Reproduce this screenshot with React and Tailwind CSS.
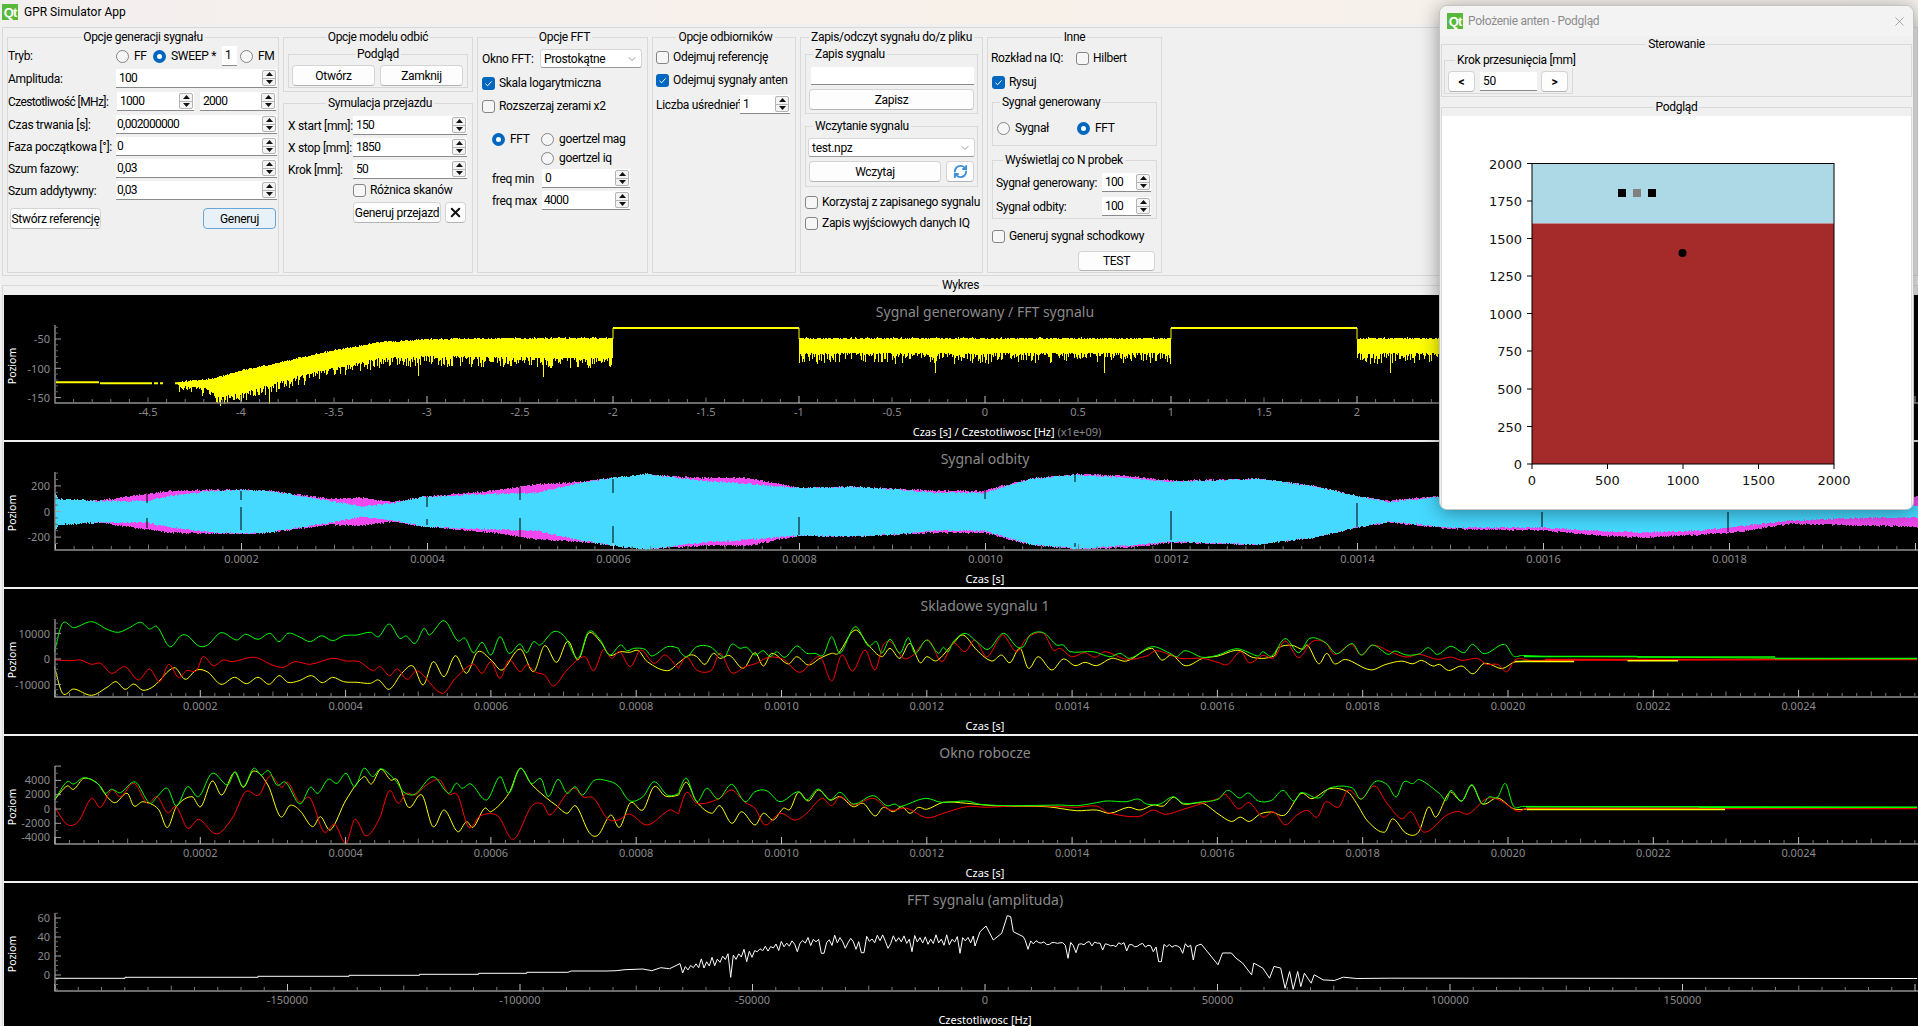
import React from "react";
import { ChevronDown, RefreshCw, X } from "lucide-react";

// seeded noise so every render gives the same traces
let seed = 1337;
function rnd() {
  seed = (seed + 0x6d2b79f5) | 0;
  let t = Math.imul(seed ^ (seed >>> 15), 1 | seed);
  t = (t + Math.imul(t ^ (t >>> 7), 61 | t)) ^ t;
  return ((t ^ (t >>> 14)) >>> 0) / 4294967296;
}

function lerp(points, x) {
  if (x <= points[0][0]) return points[0][1];
  for (let i = 1; i < points.length; i++) {
    if (x <= points[i][0]) {
      const [x0, y0] = points[i - 1];
      const [x1, y1] = points[i];
      return y0 + ((y1 - y0) * (x - x0)) / (x1 - x0);
    }
  }
  return points[points.length - 1][1];
}

function smooth(pts) {
  let d = `M${pts[0][0].toFixed(1)} ${pts[0][1].toFixed(1)}`;
  for (let i = 0; i < pts.length - 1; i++) {
    const p0 = pts[i - 1] || pts[i];
    const p1 = pts[i];
    const p2 = pts[i + 1];
    const p3 = pts[i + 2] || p2;
    const dx = p2[0] - p1[0];
    const s1 = (p2[1] - p0[1]) / (p2[0] - p0[0] || 1);
    const s2 = (p3[1] - p1[1]) / (p3[0] - p1[0] || 1);
    const c1x = p1[0] + dx / 3;
    const c1y = p1[1] + (s1 * dx) / 3;
    const c2x = p2[0] - dx / 3;
    const c2y = p2[1] - (s2 * dx) / 3;
    d += `C${c1x.toFixed(1)} ${c1y.toFixed(1)} ${c2x.toFixed(1)} ${c2y.toFixed(1)} ${p2[0].toFixed(1)} ${p2[1].toFixed(1)}`;
  }
  return d;
}

const pz7 = ([a, b]) => [a / 2.24, 580 + b / 3];
const pz11 = ([a, b]) => [680 + a / 3, 600 + b / 3];
const pz9 = ([a, b]) => [1218 + a / 2.234, 500 + b / 2.98];
const trace = (left, mid, right) => [...left.map(pz7).filter((p) => p[0] < 680), ...mid.map(pz11), ...right.map(pz9)];

/* ---- plot 1: FFT of generated signal ---- */
const fftTop = [[178, 382.7], [214, 379], [241, 371], [286, 361.7], [335, 350.7], [379, 343], [424, 340], [491, 339], [613, 338.7]];
const fftBottom = [[178, 385], [205, 388], [219, 396], [237, 394], [286, 379], [335, 367], [379, 358], [424, 356], [613, 358]];

function genBand() {
  let d = "";
  const col = (x, top, bottom) => {
    const spike = rnd();
    const extra = spike * spike * 11 + (spike > 0.985 ? 9 : 0);
    d += `M${x + 0.5} ${(top - rnd() * 1.6).toFixed(1)}V${(bottom + extra).toFixed(1)}`;
  };
  for (let x = 178; x < 613; x++) col(x, lerp(fftTop, x), lerp(fftBottom, x));
  for (let x = 799; x < 1171; x++) col(x, 339, 353);
  for (let x = 1357; x < 1445; x++) col(x, 339, 353);
  return d;
}
const bandPath = genBand();

/* ---- plot 2: reflected signal ---- */
const cyanAmp = [[55, 18], [58, 12], [98, 10], [147, 10], [170, 15], [214, 20], [241, 21], [268, 20], [330, 10], [361, 4.5], [393, 8], [424, 14], [491, 17], [536, 18], [580, 28], [613, 33], [647, 37], [700, 30], [747, 27], [799, 23], [851, 24], [893, 21.7], [936, 18], [983, 18], [1030, 32], [1077, 36], [1125, 33], [1172, 29], [1257, 32], [1313, 25], [1356, 15], [1389, 9], [1450, 15], [1545, 15], [1598, 18.5], [1643, 20], [1700, 18], [1791, 8], [1867, 5], [1917, 5]];
const magentaAmp = [[55, 10], [98, 10], [147, 17], [170, 20], [214, 21], [241, 21], [268, 20], [330, 12], [361, 13], [393, 9], [424, 14], [491, 20], [536, 26.5], [580, 29], [613, 33], [650, 36], [700, 33], [747, 33], [799, 23], [851, 24], [893, 22], [936, 20], [983, 20], [1030, 32], [1077, 36.7], [1125, 35], [1172, 30], [1257, 32], [1313, 25], [1356, 15], [1389, 10], [1450, 16], [1545, 18], [1598, 23], [1643, 25], [1700, 22], [1733, 20], [1791, 11], [1867, 13], [1917, 14]];

function genEnvelope(amp) {
  let d = "";
  for (let x = 55; x < 1918; x++) {
    const a = lerp(amp, x);
    d += `M${x + 0.5} ${(511.7 - a - rnd() * 1.8).toFixed(1)}V${(511.7 + a + rnd() * 1.8).toFixed(1)}`;
  }
  return d;
}
const magentaPath = genEnvelope(magentaAmp);
const cyanPath = genEnvelope(cyanAmp);
const notches = [[147, 493, 503], [147, 518, 528], [241, 491, 500], [241, 507, 530], [427, 497, 507], [427, 519, 525], [520, 487, 500], [520, 518, 537], [613, 479, 493], [613, 526, 543], [799, 517, 535], [985, 490, 499], [1075, 475, 482], [1075, 543, 547], [1171, 511, 540], [1357, 503, 527], [1542, 512, 527], [1728, 512, 532]];

/* ---- plot 3: signal components ---- */
const c3 = {
  green: trace(
    [[122, 215], [140, 130], [165, 143], [205, 125], [240, 148], [265, 157], [290, 143], [315, 127], [335, 147], [352, 140], [380, 200], [405, 167], [420, 167], [445, 198], [465, 195], [495, 158], [530, 180], [550, 163], [578, 178], [605, 160], [625, 185], [645, 160], [670, 170], [695, 185], [720, 167], [745, 182], [770, 167], [800, 165], [830, 157], [848, 170], [872, 132], [895, 175], [910, 168], [930, 190], [950, 145], [962, 165], [995, 122], [1025, 182], [1042, 175], [1060, 218], [1080, 187], [1100, 225], [1120, 170], [1140, 220], [1165, 192], [1180, 218], [1195, 185], [1210, 195], [1240, 155], [1265, 170], [1295, 235], [1318, 155], [1345, 180], [1365, 225], [1390, 195], [1405, 212], [1420, 205], [1445, 208], [1460, 228], [1495, 200], [1520, 205], [1545, 225]],
    [[0, 155], [20, 170], [50, 140], [90, 140], [120, 165], [135, 170], [155, 133], [180, 145], [200, 142], [225, 165], [250, 152], [270, 170], [290, 155], [315, 172], [350, 138], [380, 160], [405, 160], [430, 165], [455, 110], [480, 160], [525, 80], [565, 138], [590, 125], [605, 160], [630, 118], [660, 160], [685, 113], [705, 160], [740, 120], [775, 160], [790, 142], [805, 155], [820, 125], [855, 100], [890, 125], [925, 148], [970, 100], [1010, 140], [1030, 140], [1050, 105], [1090, 98], [1130, 135], [1150, 135], [1170, 155], [1240, 155], [1290, 170], [1320, 160], [1350, 175], [1415, 140], [1470, 160], [1490, 170], [1515, 152], [1568, 172]],
    [[0, 462], [40, 443], [70, 455], [90, 465], [100, 452], [120, 465], [150, 413], [180, 455], [205, 412], [240, 425], [265, 458], [300, 428], [320, 462], [345, 432], [380, 460], [395, 450], [420, 462], [450, 458], [470, 440], [490, 460], [520, 436], [550, 455], [568, 430], [595, 458], [640, 430], [660, 465], [680, 463], [725, 466], [935, 467], [1245, 472], [1562, 473]]
  ),
  yellow: trace(
    [[122, 260], [140, 340], [165, 327], [205, 346], [240, 322], [260, 305], [280, 328], [300, 312], [320, 331], [345, 318], [390, 263], [415, 298], [440, 270], [465, 276], [495, 313], [525, 292], [552, 311], [578, 292], [603, 313], [625, 287], [645, 307], [670, 302], [698, 287], [722, 308], [745, 292], [770, 305], [800, 307], [830, 310], [848, 300], [872, 328], [900, 280], [925, 258], [948, 315], [970, 245], [995, 290], [1020, 227], [1045, 280], [1070, 215], [1100, 240], [1125, 270], [1165, 207], [1195, 275], [1220, 197], [1247, 247], [1272, 183], [1295, 240], [1318, 160], [1345, 185], [1365, 225], [1390, 215], [1410, 217], [1430, 212], [1450, 245], [1495, 272], [1540, 230]],
    [[0, 185], [30, 165], [50, 170], [75, 193], [100, 160], [120, 175], [150, 167], [190, 205], [225, 158], [250, 198], [275, 160], [325, 192], [350, 170], [385, 195], [420, 175], [455, 160], [475, 160], [525, 90], [565, 135], [605, 170], [630, 145], [660, 175], [690, 130], [720, 188], [740, 170], [770, 182], [820, 130], [850, 105], [890, 150], [935, 183], [965, 165], [990, 188], [1020, 145], [1045, 205], [1075, 170], [1115, 210], [1150, 177], [1185, 197], [1215, 187], [1250, 197], [1295, 175], [1340, 183], [1415, 145], [1445, 180], [1475, 165], [1510, 195], [1530, 195], [1568, 175]],
    [[0, 465], [45, 448], [80, 470], [125, 465], [135, 440], [165, 433], [190, 445], [200, 432], [225, 488], [243, 457], [260, 488], [285, 475], [340, 506], [375, 490], [410, 480], [435, 488], [455, 478], [480, 495], [495, 490], [515, 508], [545, 495], [570, 518], [595, 487], [635, 502], [665, 482], [795, 481]]
  ),
  red: trace(
    [[122, 240], [160, 242], [180, 240], [205, 253], [225, 250], [250, 280], [280, 260], [310, 300], [335, 267], [358, 305], [378, 253], [400, 293], [418, 272], [440, 272], [455, 230], [478, 257], [500, 240], [520, 245], [570, 232], [610, 255], [635, 262], [660, 245], [695, 253], [745, 235], [775, 243], [805, 245], [835, 272], [852, 260], [872, 287], [890, 267], [912, 298], [935, 272], [990, 340], [1020, 295], [1060, 252], [1080, 280], [1100, 245], [1120, 295], [1140, 240], [1165, 275], [1180, 255], [1200, 277], [1220, 285], [1240, 318], [1270, 270], [1310, 230], [1330, 272], [1352, 208], [1370, 235], [1388, 215], [1412, 260], [1435, 210], [1465, 250], [1490, 225], [1520, 265]],
    [[0, 197], [20, 170], [50, 210], [95, 210], [120, 160], [155, 218], [195, 200], [230, 190], [265, 172], [310, 178], [360, 217], [420, 170], [455, 243], [485, 165], [518, 213], [555, 150], [585, 210], [610, 135], [635, 128], [670, 175], [700, 165], [745, 120], [785, 185], [820, 130], [855, 155], [885, 120], [920, 170], [955, 120], [970, 105], [1010, 155], [1040, 115], [1090, 100], [1120, 150], [1140, 145], [1175, 170], [1215, 158], [1245, 172], [1275, 155], [1340, 178], [1400, 168], [1430, 152], [1500, 175], [1568, 175]],
    [[0, 484], [22, 490], [50, 452], [70, 485], [100, 463], [125, 470], [150, 420], [180, 470], [210, 422], [240, 425], [260, 460], [298, 430], [320, 462], [345, 433], [385, 452], [420, 468], [450, 460], [490, 475], [520, 468], [545, 478], [580, 472], [600, 490], [625, 490], [645, 512], [665, 475], [700, 478], [1245, 476], [1562, 475]]
  ),
};

/* ---- plot 4: working window ---- */
const c4 = {
  green: trace(
    [[122, 660], [150, 605], [165, 612], [188, 593], [220, 612], [235, 640], [250, 628], [270, 638], [303, 606], [335, 670], [352, 650], [375, 625], [395, 678], [420, 620], [445, 650], [475, 580], [510, 615], [527, 575], [545, 620], [568, 565], [585, 585], [602, 572], [620, 615], [640, 607], [672, 672], [695, 622], [712, 640], [735, 598], [755, 610], [775, 580], [795, 620], [815, 565], [835, 590], [853, 566], [885, 600], [905, 637], [930, 642], [970, 590], [1005, 640], [1022, 610], [1035, 625], [1055, 612], [1090, 660], [1120, 590], [1140, 640], [1165, 565], [1190, 610], [1212, 597], [1228, 650], [1250, 598], [1270, 640], [1288, 620], [1305, 645], [1330, 602], [1360, 602], [1385, 618], [1410, 662], [1440, 650], [1465, 605], [1495, 645], [1520, 640]],
    [[0, 565], [20, 535], [50, 605], [80, 565], [115, 597], [155, 553], [195, 605], [225, 575], [260, 572], [300, 605], [355, 575], [380, 600], [415, 567], [450, 600], [480, 577], [520, 612], [580, 587], [620, 617], [645, 612], [660, 620], [735, 595], [785, 607], [860, 603], [900, 613], [1000, 617], [1140, 615], [1190, 617], [1240, 610], [1280, 603], [1340, 605], [1375, 597], [1400, 612], [1440, 612], [1480, 590], [1510, 610], [1568, 605]],
    [[0, 892], [22, 865], [48, 888], [68, 873], [90, 897], [120, 895], [145, 865], [170, 898], [185, 872], [225, 888], [250, 858], [300, 858], [320, 892], [350, 840], [378, 848], [398, 885], [415, 840], [435, 845], [450, 833], [495, 875], [510, 895], [520, 865], [545, 897], [567, 848], [590, 905], [605, 885], [625, 885], [642, 845], [660, 912], [680, 913], [1075, 914], [1562, 916]]
  ),
  yellow: trace(
    [[122, 660], [150, 618], [165, 628], [188, 595], [220, 612], [240, 650], [258, 668], [285, 640], [300, 678], [320, 665], [355, 688], [375, 743], [395, 680], [430, 650], [450, 680], [475, 603], [497, 645], [525, 577], [545, 622], [568, 573], [600, 615], [628, 710], [650, 676], [672, 692], [700, 740], [718, 710], [740, 750], [775, 660], [815, 590], [832, 612], [853, 568], [875, 600], [890, 600], [915, 682], [945, 645], [970, 740], [995, 690], [1025, 755], [1045, 725], [1060, 742], [1085, 685], [1100, 695], [1140, 640], [1165, 565], [1190, 612], [1225, 655], [1245, 675], [1270, 700], [1290, 678], [1320, 758], [1340, 765], [1368, 705], [1388, 742], [1412, 668], [1440, 690], [1465, 620], [1490, 648], [1520, 645]],
    [[0, 575], [20, 547], [50, 605], [95, 640], [120, 617], [155, 670], [185, 635], [225, 675], [250, 640], [280, 660], [310, 625], [330, 628], [355, 577], [385, 603], [415, 570], [450, 600], [480, 590], [520, 620], [550, 610], [585, 648], [610, 622], [640, 635], [665, 620], [690, 640], [715, 622], [740, 628], [790, 607], [860, 610], [950, 618], [1100, 620], [1190, 632], [1250, 630], [1290, 640], [1345, 622], [1380, 630], [1420, 615], [1450, 618], [1480, 592], [1510, 612], [1568, 610]],
    [[0, 935], [30, 958], [50, 945], [70, 958], [95, 935], [120, 930], [150, 938], [185, 875], [210, 890], [250, 860], [290, 870], [310, 905], [335, 958], [372, 990], [390, 950], [420, 993], [448, 990], [470, 915], [487, 945], [510, 885], [520, 870], [545, 897], [567, 850], [590, 905], [625, 888], [660, 920], [690, 921], [1132, 921]]
  ),
  red: trace(
    [[122, 680], [150, 733], [175, 725], [205, 655], [225, 682], [250, 630], [270, 650], [300, 610], [330, 670], [352, 650], [375, 698], [395, 680], [420, 745], [445, 718], [485, 762], [520, 715], [550, 635], [580, 645], [605, 587], [630, 622], [645, 607], [670, 665], [695, 655], [725, 755], [750, 733], [775, 790], [795, 718], [820, 768], [850, 715], [872, 632], [892, 670], [910, 640], [930, 645], [955, 615], [985, 600], [1005, 642], [1025, 645], [1050, 742], [1075, 708], [1115, 708], [1150, 778], [1190, 680], [1215, 672], [1232, 705], [1270, 640], [1288, 625], [1305, 650], [1330, 655], [1360, 715], [1385, 720], [1410, 702], [1450, 735], [1500, 690], [1520, 700]],
    [[0, 625], [20, 577], [50, 610], [115, 597], [155, 570], [195, 607], [225, 625], [255, 675], [300, 640], [345, 660], [380, 640], [425, 595], [455, 617], [480, 590], [520, 615], [580, 595], [630, 630], [680, 625], [740, 653], [790, 640], [860, 620], [920, 622], [1000, 618], [1100, 618], [1190, 622], [1250, 618], [1285, 638], [1375, 650], [1420, 630], [1455, 643], [1510, 628], [1568, 610]],
    [[0, 890], [17, 878], [45, 920], [70, 902], [100, 945], [125, 930], [150, 968], [175, 940], [200, 925], [222, 945], [240, 900], [270, 915], [290, 865], [320, 890], [350, 852], [378, 905], [410, 950], [432, 930], [460, 990], [510, 940], [535, 928], [560, 935], [600, 890], [630, 895], [670, 928], [690, 918], [1562, 919]]
  ),
};

/* ---- plot 5: FFT amplitude ---- */
function genFft() {
  const left = [[122, 325], [280, 325], [280, 322], [578, 322], [578, 319], [782, 319], [782, 316], [940, 316], [940, 313], [1072, 313], [1072, 310], [1180, 310], [1180, 307], [1272, 307], [1280, 303], [1360, 303], [1380, 302], [1400, 299], [1440, 297], [1460, 302], [1480, 293], [1500, 296]];
  const base = [[0, 235], [100, 215], [200, 190], [300, 165], [400, 152], [600, 150], [860, 150], [1040, 145], [1100, 150], [1568, 160]];
  const spikes = [[150, 262], [203, 215], [350, 185], [428, 190], [497, 175], [528, 178], [548, 188], [622, 175], [698, 185], [838, 190], [1043, 178], [1165, 205], [1190, 188], [1265, 180], [1340, 183], [1418, 185], [1440, 215], [1510, 190], [1537, 210]];
  const peak = [[885, 168], [900, 125], [918, 108], [940, 150], [965, 130], [982, 77], [992, 80], [1000, 125], [1030, 140]];
  const pts = left.map(([a, b]) => [a / 2.24, 870 + b / 3]);
  const noisy = (a) => {
    const s = spikes.find((p) => Math.abs(p[0] - a) <= 4);
    return [680 + a / 3, 890 + (s ? s[1] : lerp(base, a) + (a % 16 ? 9 : -9) + (rnd() - 0.5) * 14) / 3];
  };
  for (let a = 0; a < 885; a += 8) pts.push(noisy(a));
  peak.forEach(([a, b]) => pts.push([680 + a / 3, 890 + b / 3]));
  for (let a = 1036; a < 1568; a += 8) pts.push(noisy(a));
  const right = [[0, 1385], [10, 1350], [30, 1350], [40, 1365], [55, 1380], [75, 1415], [80, 1380], [100, 1395], [115, 1425], [125, 1390], [140, 1395], [150, 1455], [160, 1405], [168, 1458], [178, 1405], [185, 1450], [193, 1410], [208, 1440], [215, 1415], [235, 1430], [260, 1432], [280, 1422], [310, 1426], [385, 1425], [1562, 1426]];
  right.forEach((p) => pts.push(pz9(p)));
  return pts.map((p, i) => `${i ? "L" : "M"}${p[0].toFixed(1)} ${p[1].toFixed(1)}`).join("");
}
const fftPath = genFft();

function Plot({ top, height = 145, title, xLabel, xLabelX = 985, xExtra, yLabelY, xOrigin, xStep, xLabelAt, yOrigin, yStep, yEvery, yLabels, children }) {
  const axisTop = top + 30;
  const axisBottom = top + 108;
  const xTicks = [];
  for (let i = Math.ceil((55 - xOrigin) / xStep); xOrigin + i * xStep < 1918; i++) xTicks.push(i);
  const yTicks = [];
  for (let i = Math.ceil((axisTop - yOrigin) / yStep); yOrigin + i * yStep < axisBottom; i++) yTicks.push(i);
  return (
    <svg width="1914" height={height} viewBox={`4 ${top} 1914 ${height}`} className="block shrink-0 bg-black font-['Noto_Sans',sans-serif] tracking-normal">
      <text x="985" y={top + 22} textAnchor="middle" className="fill-[#8a8a8a] text-[14px]">{title}</text>
      <text x="16" y={yLabelY} textAnchor="middle" transform={`rotate(-90 16 ${yLabelY})`} className="fill-white text-[10.5px]">Poziom</text>
      {children}
      <path d={`M55 ${axisTop}V${axisBottom}H1918`} fill="none" stroke="#8f8f8f" strokeWidth="1.4" />
      {xTicks.map((i) => {
        const x = xOrigin + i * xStep;
        const len = i % 10 === 0 ? 7 : i % 5 === 0 ? 5.5 : 4;
        return <path key={i} d={`M${x} ${axisBottom}v${-len}`} stroke={i % 10 === 0 ? "#c0c0c0" : "#777777"} strokeWidth="1" />;
      })}
      {xTicks.map((i) => {
        const x = xOrigin + i * xStep;
        const label = x > 70 && x < 1880 ? xLabelAt(i) : null;
        return label === null ? null : (
          <text key={i} x={x} y={axisBottom + 13} textAnchor="middle" className="fill-[#8a8a8a] text-[11px]">{label}</text>
        );
      })}
      {yTicks.map((i) => (
        <path key={i} d={`M55 ${yOrigin + i * yStep}h${i % yEvery === 0 ? 6 : 3}`} stroke={i % yEvery === 0 ? "#a0a0a0" : "#666666"} strokeWidth="1" />
      ))}
      {yLabels.map(([y, label]) => (
        <text key={label} x="50" y={y + 4} textAnchor="end" className="fill-[#8a8a8a] text-[11px]">{label}</text>
      ))}
      <text x={xLabelX} y={top + 141} textAnchor="middle" className="fill-white text-[11px]">
        {xLabel}
        {xExtra && <tspan className="fill-[#8a8a8a]"> {xExtra}</tspan>}
      </text>
    </svg>
  );
}

const timeLabel = (step) => (i) => (i % 10 === 0 && i > 0 ? ((i / 10) * step).toFixed(4) : null);

function Lines({ c }) {
  return (
    <g fill="none" strokeWidth="1">
      <path d={smooth(c.yellow)} stroke="#ffff00" />
      <path d={smooth(c.red)} stroke="#ff0000" />
      <path d={smooth(c.green)} stroke="#00ff00" />
    </g>
  );
}

function Group({ title, left, className = "", children }) {
  return (
    <fieldset className={`min-w-0 shrink-0 border border-[#d9d9d9] ${className}`}>
      <legend className={`${left ? "ml-[7px]" : "mx-auto"} h-[16px] whitespace-nowrap px-[2px] leading-[16px]`}>{title}</legend>
      {children}
    </fieldset>
  );
}

function SpinArrows() {
  return (
    <div className="mr-[1px] flex h-[16px] w-[14px] shrink-0 flex-col rounded-[2px] border border-[#b4b4b4] bg-[#f4f4f4]">
      <div className="flex flex-1 items-center justify-center border-b border-[#b4b4b4]">
        <svg width="7" height="4" viewBox="0 0 7 4"><path d="M3.5 0L7 4H0z" fill="#111" /></svg>
      </div>
      <div className="flex flex-1 items-center justify-center">
        <svg width="7" height="4" viewBox="0 0 7 4"><path d="M0 0h7L3.5 4z" fill="#111" /></svg>
      </div>
    </div>
  );
}

function Spin({ value, className = "" }) {
  return (
    <div className={`flex h-[19px] shrink-0 items-center border-b border-[#8a8a8a] bg-white pl-[3px] ${className}`}>
      <span className="flex-1 leading-[18px] tracking-[-0.7px]">{value}</span>
      <SpinArrows />
    </div>
  );
}

function Field({ value, className = "" }) {
  return <div className={`h-[19px] shrink-0 border-b border-[#8a8a8a] bg-white pl-[3px] leading-[18px] ${className}`}>{value}</div>;
}

function Combo({ value, className = "" }) {
  return (
    <div className={`flex h-[19px] shrink-0 items-center justify-between rounded-[3px] border border-[#d6d6d6] border-b-[#9a9a9a] bg-white pl-[3px] pr-[3px] ${className}`}>
      <span>{value}</span>
      <ChevronDown size={12} strokeWidth={1} color="#333" />
    </div>
  );
}

function Btn({ children, className = "" }) {
  return (
    <div className={`flex h-[21px] shrink-0 items-center justify-center rounded-[4px] border border-[#d4d4d4] border-b-[#b4b4b4] bg-[#fdfdfd] whitespace-nowrap ${className}`}>
      {children}
    </div>
  );
}

function Check({ label, checked, className = "" }) {
  return (
    <div className={`flex h-[16px] shrink-0 items-center gap-[4px] whitespace-nowrap ${className}`}>
      {checked ? (
        <span className="flex h-[13px] w-[13px] shrink-0 items-center justify-center rounded-[3px] bg-[#0067c0]">
          <svg width="9" height="9" viewBox="0 0 9 9"><path d="M1.5 4.8L3.6 6.8L7.5 2.4" fill="none" stroke="#fff" strokeWidth="1" /></svg>
        </span>
      ) : (
        <span className="h-[13px] w-[13px] shrink-0 rounded-[3px] border border-[#858585] bg-[#f6f6f6]" />
      )}
      {label && <span>{label}</span>}
    </div>
  );
}

function Radio({ label, checked, className = "" }) {
  return (
    <div className={`flex h-[16px] shrink-0 items-center gap-[5px] whitespace-nowrap ${className}`}>
      {checked ? (
        <span className="flex h-[13px] w-[13px] shrink-0 items-center justify-center rounded-full bg-[#0067c0]">
          <span className="h-[5px] w-[5px] rounded-full bg-white" />
        </span>
      ) : (
        <span className="h-[13px] w-[13px] shrink-0 rounded-full border border-[#858585] bg-[#f6f6f6]" />
      )}
      <span>{label}</span>
    </div>
  );
}

function QtLogo({ className = "" }) {
  return (
    <div className={`flex h-[16px] w-[16px] shrink-0 items-center justify-center bg-[#57b83a] font-['Liberation_Sans',sans-serif] text-[13px] font-bold leading-none tracking-[-1px] text-white ${className}`}>
      Qt
    </div>
  );
}

function Row({ label, labelClass = "w-[108px]", className = "", children }) {
  return (
    <div className={`flex shrink-0 items-center ${className}`}>
      <span className={`shrink-0 whitespace-nowrap ${labelClass}`}>{label}</span>
      {children}
    </div>
  );
}

function AntennaWindow() {
  const yTicks = [[164.5, "2000"], [202, "1750"], [239.5, "1500"], [277, "1250"], [314.5, "1000"], [352, "750"], [390, "500"], [427.5, "250"], [465, "0"]];
  const xTicks = [[1532, "0"], [1607.5, "500"], [1683, "1000"], [1758.5, "1500"], [1834, "2000"]];
  return (
    <div className="absolute left-[1439px] top-[5px] flex h-[505px] w-[475px] flex-col overflow-hidden rounded-[8px] border border-[#c4c4c4] bg-[#f0f0f0] shadow-[0_3px_20px_rgba(0,0,0,0.4)]">
      <div className="flex h-[30px] shrink-0 items-center bg-[#f3f3f3] pl-[7px] pr-[6px]">
        <QtLogo />
        <span className="ml-[5px] flex-1 text-[#8c8c8c]">Położenie anten - Podgląd</span>
        <X size={15} strokeWidth={1} color="#777" />
      </div>
      <div className="mx-[1px] flex flex-col">
        <Group title="Sterowanie" className="h-[61px] px-[2px]">
          <Group title="Krok przesunięcia [mm]" left className="h-[42px] w-[129px] px-[3px]">
            <div className="mt-[3px] flex items-center">
              <Btn className="w-[27px] font-bold">&lt;</Btn>
              <Field value="50" className="ml-[5px] w-[57px]" />
              <Btn className="ml-[4px] w-[27px] font-bold">&gt;</Btn>
            </div>
          </Group>
        </Group>
        <Group title="Podgląd" className="mt-[2px] h-[420px]">
          <div className="pt-[1px]">
            <svg width="469" height="393" viewBox="1442 117 469 393" className="block bg-white font-['DejaVu_Sans',sans-serif] tracking-normal">
              <rect x="1532" y="164.5" width="302" height="60" fill="#add8e6" />
              <rect x="1532" y="224.5" width="302" height="240.5" fill="#a52a2a" />
              <rect x="1532" y="164.5" width="302" height="300.5" fill="none" stroke="#000" strokeWidth="1" />
              <rect x="1618" y="190" width="8" height="8" fill="#000" />
              <rect x="1633" y="190" width="8" height="8" fill="#808080" />
              <rect x="1648" y="190" width="8" height="8" fill="#000" />
              <circle cx="1682.5" cy="254" r="4" fill="#000" />
              {yTicks.map(([y, label]) => (
                <g key={label}>
                  <path d={`M1527 ${y}h5`} stroke="#000" strokeWidth="1" />
                  <text x="1522" y={y + 5} textAnchor="end" className="fill-[#111] text-[13px]">{label}</text>
                </g>
              ))}
              {xTicks.map(([x, label]) => (
                <g key={label}>
                  <path d={`M${x} 465v5`} stroke="#000" strokeWidth="1" />
                  <text x={x} y="486" textAnchor="middle" className="fill-[#111] text-[13px]">{label}</text>
                </g>
              ))}
            </svg>
          </div>
        </Group>
      </div>
    </div>
  );
}

export default function App() {
  return (
    <div className="relative h-[1026px] w-full overflow-hidden bg-[#f0f0f0] font-['Roboto',sans-serif] text-[12px] tracking-[-0.3px] text-black">
      <div className="flex h-[24px] items-center bg-gradient-to-r from-[#f3efef] via-[#f8f1ea] to-[#f5f1ec] pl-[2px]">
        <QtLogo />
        <span className="ml-[6px] tracking-normal">GPR Simulator App</span>
      </div>

      {/* options strip */}
      <div className="ml-[2px] mt-[3px] flex h-[249px] items-start gap-[4px] border border-[#d9d9d9] pl-[4px] pt-[1px]">
        <Group title="Opcje generacji sygnału" className="h-[244px] w-[272px]">
          <Row label="Tryb:" className="mt-[1px] h-[20px]">
            <Radio label="FF" className="w-[37px]" />
            <Radio label="SWEEP *" checked className="w-[69px]" />
            <Field value="1" className="!h-[20px] w-[15px]" />
            <Radio label="FM" className="ml-[3px]" />
          </Row>
          <Row label="Amplituda:" className="mt-[3px]"><Spin value="100" className="w-[161px]" /></Row>
          <Row label="Czestotliwość [MHz]:" className="mt-[4px]" labelClass="w-[109px] tracking-[-0.6px]">
            <Spin value="1000" className="w-[77px]" />
            <Spin value="2000" className="ml-[6px] w-[76px]" />
          </Row>
          <Row label="Czas trwania [s]:" className="mt-[4px]"><Spin value="0,002000000" className="w-[161px] !pl-[1px]" /></Row>
          <Row label="Faza początkowa [°]:" className="mt-[3px]"><Spin value="0" className="w-[161px] !pl-[1px]" /></Row>
          <Row label="Szum fazowy:" className="mt-[3px]"><Spin value="0,03" className="w-[161px] !pl-[1px]" /></Row>
          <Row label="Szum addytywny:" className="mt-[3px]"><Spin value="0,03" className="w-[161px] !pl-[1px]" /></Row>
          <div className="mt-[8px] flex justify-between pl-[2px] pr-[2px]">
            <Btn className="w-[91px]">Stwórz referencję</Btn>
            <Btn className="w-[73px] !border-[#6aa6d6] !bg-[#e8f1f8]">Generuj</Btn>
          </div>
        </Group>

        <div className="flex w-[190px] shrink-0 flex-col">
          <Group title="Opcje modelu odbić" className="h-[63px] px-[4px]">
            <Group title="Podgląd" className="mt-[1px] h-[42px] w-[180px]">
              <div className="mt-[3px] flex gap-[5px] pl-[3px]">
                <Btn className="w-[83px]">Otwórz</Btn>
                <Btn className="w-[83px]">Zamknij</Btn>
              </div>
            </Group>
          </Group>
          <Group title="Symulacja przejazdu" className="mt-[3px] h-[178px] pl-[4px]">
            <Row label="X start [mm]:" labelClass="w-[65px]" className="mt-[5px]"><Spin value="150" className="w-[114px]" /></Row>
            <Row label="X stop [mm]:" labelClass="w-[65px]" className="mt-[3px]"><Spin value="1850" className="w-[114px]" /></Row>
            <Row label="Krok [mm]:" labelClass="w-[65px]" className="mt-[3px]"><Spin value="50" className="w-[114px]" /></Row>
            <Check label="Różnica skanów" className="ml-[65px] mt-[3px]" />
            <div className="ml-[65px] mt-[4px] flex gap-[4px]">
              <Btn className="w-[88px]">Generuj przejazd</Btn>
              <Btn className="w-[21px]"><X size={15} strokeWidth={3.2} color="#111" /></Btn>
            </div>
          </Group>
        </div>

        <Group title="Opcje FFT" className="h-[244px] w-[171px] pl-[4px]">
          <Row label="Okno FFT:" labelClass="w-[58px]" className="mt-[4px]"><Combo value="Prostokątne" className="w-[102px]" /></Row>
          <Check label="Skala logarytmiczna" checked className="mt-[7px]" />
          <Check label="Rozszerzaj zerami x2" className="mt-[7px]" />
          <div className="ml-[10px] mt-[17px] flex">
            <Radio label="FFT" checked className="w-[49px]" />
            <Radio label="goertzel mag" />
          </div>
          <Radio label="goertzel iq" className="ml-[59px] mt-[3px]" />
          <Row label="freq min" labelClass="w-[50px]" className="ml-[10px] mt-[3px]"><Spin value="0" className="w-[88px]" /></Row>
          <Row label="freq max" labelClass="w-[50px]" className="ml-[10px] mt-[3px]"><Spin value="4000" className="w-[88px] !pl-[2px]" /></Row>
        </Group>

        <Group title="Opcje odbiorników" className="h-[244px] w-[144px] pl-[3px]">
          <Check label="Odejmuj referencję" className="mt-[4px]" />
          <Check label="Odejmuj sygnały anten" checked className="mt-[7px]" />
          <Row label="Liczba uśrednień" labelClass="w-[84px]" className="mt-[7px]"><Spin value="1" className="w-[50px]" /></Row>
        </Group>

        <Group title="Zapis/odczyt sygnału do/z pliku" className="h-[244px] w-[183px] px-[4px]">
          <Group title="Zapis sygnalu" left className="mt-[1px] h-[68px]">
            <Field value="" className="ml-[5px] mt-[5px] !h-[18px] w-[163px]" />
            <Btn className="ml-[3px] mt-[4px] w-[165px]">Zapisz</Btn>
          </Group>
          <Group title="Wczytanie sygnalu" left className="mt-[4px] h-[69px]">
            <Combo value="test.npz" className="ml-[2px] mt-[4px] w-[167px]" />
            <div className="ml-[3px] mt-[4px] flex gap-[5px]">
              <Btn className="w-[132px]">Wczytaj</Btn>
              <Btn className="w-[28px]"><RefreshCw size={15} strokeWidth={3} color="#3f8fd6" /></Btn>
            </div>
          </Group>
          <Check label="Korzystaj z zapisanego sygnalu" className="mt-[7px]" />
          <Check label="Zapis wyjściowych danych IQ" className="mt-[5px]" />
        </Group>

        <Group title="Inne" className="h-[244px] w-[175px] px-[4px]">
          <Row label="Rozkład na IQ:" labelClass="w-[85px] -ml-[1px]" className="mt-[4px]"><Check label="Hilbert" /></Row>
          <Check label="Rysuj" checked className="mt-[7px]" />
          <Group title="Sygnał generowany" left className="mt-[4px] h-[52px] w-[165px]">
            <div className="ml-[4px] mt-[10px] flex">
              <Radio label="Sygnał" className="w-[80px]" />
              <Radio label="FFT" checked />
            </div>
          </Group>
          <Group title="Wyświetlaj co N probek" left className="mt-[6px] h-[67px] w-[165px] pl-[3px]">
            <Row label="Sygnał generowany:" labelClass="w-[106px]" className="mt-[5px]"><Spin value="100" className="w-[49px]" /></Row>
            <Row label="Sygnał odbity:" labelClass="w-[106px]" className="mt-[5px]"><Spin value="100" className="w-[49px]" /></Row>
          </Group>
          <Check label="Generuj sygnał schodkowy" className="mt-[9px]" />
          <Btn className="ml-[86px] mt-[7px] !h-[20px] w-[77px]">TEST</Btn>
        </Group>
      </div>

      {/* plots */}
      <fieldset className="ml-[2px] mt-[1px] min-w-0 border border-[#d9d9d9] pl-[1px]">
        <legend className="mx-auto h-[16px] px-[4px] leading-[16px]">Wykres</legend>
        <div className="flex flex-col gap-[2px] pt-[2px]">
          <Plot
            top={295}
            title="Sygnal generowany / FFT sygnalu"
            xLabel="Czas [s] / Czestotliwosc [Hz]"
            xExtra="(x1e+09)"
            xLabelX={1007}
            yLabelY={366}
            xOrigin={985}
            xStep={18.6}
            xLabelAt={(i) => (i % 5 === 0 ? String(Number((i / 10).toFixed(1))) : null)}
            yOrigin={339}
            yStep={5.86}
            yEvery={5}
            yLabels={[[339, "-50"], [369, "-100"], [398, "-150"]]}
          >
            <path d={bandPath} stroke="#ffff00" strokeWidth="1" shapeRendering="crispEdges" fill="none" />
            <path d="M56 382.3H99M100 383.3H152M154 383.3H158M160 383.3H163M175 383.3H178M613 328H799M1171 328H1357" stroke="#ffff00" strokeWidth="2" fill="none" />
            <path d="M613 328V339M799 328V339M1171 328V339M1357 328V339" stroke="#ffff00" strokeWidth="1" fill="none" />
          </Plot>

          <Plot
            top={442}
            title="Sygnal odbity"
            xLabel="Czas [s]"
            yLabelY={513}
            xOrigin={55.5}
            xStep={18.6}
            xLabelAt={timeLabel(0.0002)}
            yOrigin={511.5}
            yStep={6.4}
            yEvery={4}
            yLabels={[[486, "200"], [511.5, "0"], [537, "-200"]]}
          >
            <path d={magentaPath} stroke="#ee48ee" strokeWidth="1" shapeRendering="crispEdges" fill="none" />
            <path d={cyanPath} stroke="#46d9ff" strokeWidth="1" shapeRendering="crispEdges" fill="none" />
            {notches.map(([x, y1, y2]) => (
              <path key={`${x}-${y1}`} d={`M${x} ${y1}V${y2}`} stroke="#000" strokeWidth="1" />
            ))}
          </Plot>

          <Plot
            top={589}
            title="Skladowe sygnalu 1"
            xLabel="Czas [s]"
            yLabelY={660}
            xOrigin={55}
            xStep={14.53}
            xLabelAt={timeLabel(0.0002)}
            yOrigin={659}
            yStep={5.12}
            yEvery={5}
            yLabels={[[634, "10000"], [659, "0"], [685, "-10000"]]}
          >
            <Lines c={c3} />
            <path d="M1545 659.6H1917" stroke="#ff0000" strokeWidth="1.5" />
            <path d="M1524 656.6H1637M1637 657H1775M1775 658.5H1917" stroke="#00ff00" strokeWidth="1.5" />
            <path d="M1515 661.4H1574M1627.5 660.7H1678" stroke="#ffff00" strokeWidth="1.5" />
          </Plot>

          <Plot
            top={736}
            title="Okno robocze"
            xLabel="Czas [s]"
            yLabelY={807}
            xOrigin={55}
            xStep={14.53}
            xLabelAt={timeLabel(0.0002)}
            yOrigin={809}
            yStep={7.15}
            yEvery={2}
            yLabels={[[780, "4000"], [794, "2000"], [809, "0"], [823, "-2000"], [837, "-4000"]]}
          >
            <Lines c={c4} />
            <path d="M1526 808.5H1917" stroke="#ff0000" strokeWidth="1.5" />
            <path d="M1526 806.8H1699M1699 807.3H1917" stroke="#00ff00" strokeWidth="1.5" />
            <path d="M1527 809.5H1725" stroke="#ffff00" strokeWidth="1.5" />
          </Plot>

          <Plot
            top={883}
            title="FFT sygnalu (amplituda)"
            xLabel="Czestotliwosc [Hz]"
            yLabelY={954}
            xOrigin={985}
            xStep={23.25}
            xLabelAt={(i) => (i % 10 === 0 ? String(i * 5000) : null)}
            yOrigin={975}
            yStep={4.75}
            yEvery={4}
            yLabels={[[918, "60"], [937, "40"], [956, "20"], [975, "0"]]}
          >
            <path d={fftPath} stroke="#ffffff" strokeWidth="1" fill="none" />
          </Plot>
        </div>
      </fieldset>

      <AntennaWindow />
    </div>
  );
}
